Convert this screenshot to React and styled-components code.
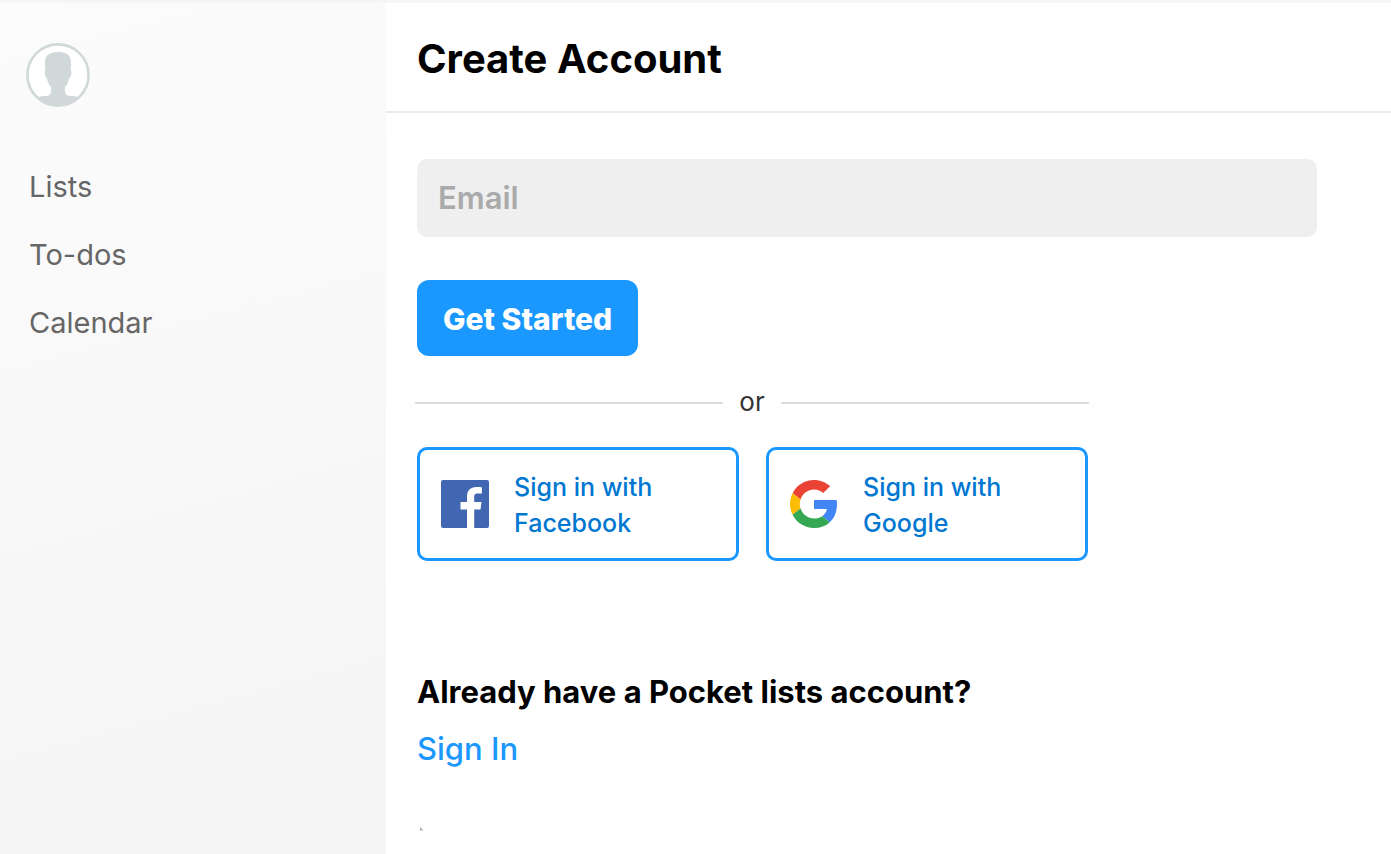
import React, { useState } from "react";
import styled, { createGlobalStyle } from "styled-components";

const colors = {
  blue: "#1a98ff",
  "dark-blue": "#0077d1",
  grey: "#666666",
  "light-grey": "#efefef",
  line: "#dddddd",
  avatar: "#d0d8da",
};

const GlobalStyle = createGlobalStyle`
  * {
    box-sizing: border-box;
  }

  body {
    margin: 0;
    background-color: #ffffff;
    color: #000000;
    font-family: Inter, "Liberation Sans", sans-serif;
  }
`;

const Page = styled.div`
  display: flex;
  min-height: 100vh;
  border-top: 3px solid #f6f6f6;
`;

const Sidebar = styled.aside`
  flex: 0 0 386px;
  padding: 40px 26px;
  background: linear-gradient(165deg, #fbfbfb 0%, #f9f9f9 40%, #f6f6f6 75%, #f5f5f5 100%);
`;

const AvatarLink = styled.a`
  display: block;
  width: 64px;
  height: 64px;
`;

const Menu = styled.nav`
  display: flex;
  flex-direction: column;
  gap: 32px;
  margin-top: 62px;
  padding-left: 3px;
`;

const MenuLink = styled.a`
  color: ${colors.grey};
  font-size: 29px;
  line-height: 36px;
  text-decoration: none;
`;

const Main = styled.main`
  flex: 1;
  min-width: 0;
`;

const Header = styled.header`
  padding: 32px 31px 28px;
  border-bottom: 2px solid #ececec;
`;

const Title = styled.h1`
  margin: 0;
  font-size: 40px;
  font-weight: 700;
  line-height: 48px;
`;

const Content = styled.div`
  padding: 46px 31px 20px;
`;

const Input = styled.input`
  display: block;
  width: 100%;
  max-width: 900px;
  height: 78px;
  padding: 0 21px 2px;
  border: none;
  border-radius: 10px;
  background-color: ${colors["light-grey"]};
  font-family: inherit;
  font-size: 31px;
  font-weight: 600;

  &::placeholder {
    color: #aaaaaa;
    opacity: 1;
  }
`;

const SubmitButton = styled.button`
  display: block;
  height: 76px;
  margin-top: 43px;
  padding: 2px 26px 0;
  border: none;
  border-radius: 12px;
  background-color: ${colors.blue};
  color: #ffffff;
  font-family: inherit;
  font-size: 30px;
  font-weight: 800;
  cursor: pointer;
`;

const Options = styled.div`
  max-width: 671px;
`;

const Divider = styled.div`
  display: flex;
  align-items: center;
  gap: 16px;
  margin: 27px -1px 26px -2px;
  color: #333333;
  font-size: 26px;
  line-height: 38px;

  &::before,
  &::after {
    content: "";
    flex: 1;
    height: 2px;
    margin-top: 2px;
    background-color: ${colors.line};
  }
`;

const SocialButtons = styled.div`
  display: grid;
  grid-template-columns: 1fr 1fr;
  gap: 27px;
`;

const SocialButton = styled.button`
  display: flex;
  align-items: center;
  gap: 25px;
  height: 114px;
  padding: 0 21px;
  border: 3px solid ${colors.blue};
  border-radius: 10px;
  background-color: #ffffff;
  color: ${colors["dark-blue"]};
  font-family: inherit;
  font-size: 25px;
  font-weight: 500;
  line-height: 36px;
  text-align: left;
  cursor: pointer;
`;

const SocialLabel = styled.span`
  padding-top: 2px;
`;

const Question = styled.h2`
  margin: 109px 0 0;
  font-size: 31px;
  font-weight: 700;
  line-height: 44px;
`;

const SignInLink = styled.a`
  display: inline-block;
  margin-top: 14px;
  color: ${colors.blue};
  font-size: 31px;
  font-weight: 500;
  line-height: 42px;
  text-decoration: none;
`;

const Mark = styled.svg`
  display: block;
  margin: 57px 0 0 3px;
`;

const Avatar = () => (
  <svg width="64" height="64" viewBox="0 0 64 64" aria-hidden="true">
    <circle cx="32" cy="32" r="30.6" fill="#ffffff" stroke={colors.avatar} strokeWidth="2.6" />
    <path
      fill={colors.avatar}
      d="M11.500 54.300C15 53 21 53.200 23.500 52C25 51.300 25.200 48.500 25.200 44.500C23 42 21.600 38.800 21 35.500C19.200 35 18.300 29.500 18.900 27.600C19 27.200 19.300 27 19.500 27C19 24 18.800 20 19.200 17C20 11.500 25 9 32 9S44 11.500 44.800 17C45.200 20 45 24 44.500 27C44.700 27 45.200 27.200 45.300 27.600C45.900 29.500 44.800 35 43 35.500C42.400 38.800 41 42 38.800 44.500C38.800 48.500 39.200 51.300 40.700 52C43 53.200 49 53 52.500 54.300C46.500 60.500 39.500 63.200 32 63.200S17.500 60.500 11.500 54.300Z"
    />
  </svg>
);

const FacebookIcon = () => (
  <svg width="48" height="48" viewBox="0 0 48 48" aria-hidden="true">
    <rect width="48" height="48" rx="2" fill="#4267b2" />
    <path
      fill="#ffffff"
      d="M26 48V29.500h-6.500V22H26v-5.500C26 10.500 29.600 7 35.200 7c2.400 0 4.600.1 5.700.3v6.300h-4c-3 0-3.700 1.600-3.700 3.700V22h7.300l-1 7.500h-6.300V48z"
    />
  </svg>
);

const GoogleIcon = () => (
  <svg width="48" height="48" viewBox="0 0 48 48" aria-hidden="true">
    <path
      fill="#EA4335"
      d="M24 9.500c3.540 0 6.710 1.220 9.210 3.600l6.850-6.850C35.900 2.380 30.470 0 24 0 14.620 0 6.510 5.380 2.560 13.220l7.980 6.190C12.430 13.720 17.740 9.500 24 9.500z"
    />
    <path
      fill="#4285F4"
      d="M46.980 24.550c0-1.570-.15-3.090-.38-4.550H24v9.020h12.940c-.58 2.960-2.260 5.480-4.780 7.180l7.730 6c4.510-4.180 7.090-10.360 7.090-17.650z"
    />
    <path
      fill="#FBBC05"
      d="M10.530 28.590c-.48-1.450-.76-2.990-.76-4.590s.27-3.140.76-4.590l-7.980-6.190C.92 16.460 0 20.120 0 24c0 3.880.92 7.540 2.560 10.780l7.970-6.190z"
    />
    <path
      fill="#34A853"
      d="M24 48c6.480 0 11.930-2.130 15.890-5.810l-7.730-6c-2.150 1.450-4.920 2.300-8.160 2.300-6.260 0-11.570-4.220-13.470-9.910l-7.980 6.190C6.510 42.620 14.620 48 24 48z"
    />
  </svg>
);

const menuItems = ["Lists", "To-dos", "Calendar"];

const App = () => {
  const [email, setEmail] = useState("");

  const handleSubmit = (e) => {
    e.preventDefault();
  };

  return (
    <>
      <GlobalStyle />
      <Page>
        <Sidebar>
          <AvatarLink href="#profile" aria-label="Profile">
            <Avatar />
          </AvatarLink>
          <Menu>
            {menuItems.map((item) => (
              <MenuLink key={item} href={`#${item.toLowerCase()}`}>
                {item}
              </MenuLink>
            ))}
          </Menu>
        </Sidebar>
        <Main>
          <Header>
            <Title>Create Account</Title>
          </Header>
          <Content>
            <form onSubmit={handleSubmit}>
              <Input
                type="email"
                name="email"
                aria-label="Email"
                placeholder="Email"
                value={email}
                onChange={(e) => setEmail(e.target.value)}
              />
              <SubmitButton type="submit">Get Started</SubmitButton>
            </form>
            <Options>
              <Divider>or</Divider>
              <SocialButtons>
                <SocialButton type="button">
                  <FacebookIcon />
                  <SocialLabel>
                    Sign in with
                    <br />
                    Facebook
                  </SocialLabel>
                </SocialButton>
                <SocialButton type="button">
                  <GoogleIcon />
                  <SocialLabel>
                    Sign in with
                    <br />
                    Google
                  </SocialLabel>
                </SocialButton>
              </SocialButtons>
            </Options>
            <Question>Already have a Pocket lists account?</Question>
            <SignInLink href="#signin">Sign In</SignInLink>
            <Mark width="4" height="4" viewBox="0 0 4 4" aria-hidden="true">
              <path d="M0 0l3.500 3.500H0z" fill="#aaaaaa" />
            </Mark>
          </Content>
        </Main>
      </Page>
    </>
  );
};

export default App;
